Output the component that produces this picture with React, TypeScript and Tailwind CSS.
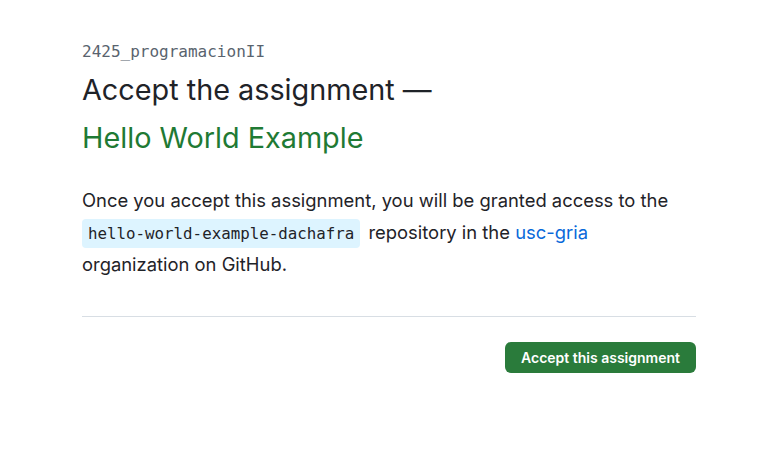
export default function App() {
  return (
    <div
      className="min-h-screen w-full bg-white text-[#1f2328]"
      style={{ fontFamily: 'Inter, "Noto Sans", "Liberation Sans", sans-serif' }}
    >
      <div className="ml-[82px] w-[614px] pt-[42px]">
        {/* Header */}
        <div
          className="text-[16px] leading-[20px] text-[#59636e]"
          style={{ fontFamily: '"DejaVu Sans Mono", "Liberation Mono", monospace' }}
        >
          2425_programacionII
        </div>
        <h1 className="mt-[4px] text-[28.8px] leading-[48px] font-normal">
          Accept the assignment —
        </h1>
        <h2 className="text-[28.8px] leading-[48px] font-normal text-[#1f7a34]">
          Hello World Example
        </h2>

        {/* Body */}
        <p className="mt-[22px] text-[18.4px] leading-[32px]">
          Once you accept this assignment, you will be granted access to the{' '}
          <code
            className="mr-[3px] rounded-[4px] bg-[#ddf4ff] px-[6px] py-[5px] text-[15.8px] leading-none text-[#1f2328]"
            style={{ fontFamily: '"DejaVu Sans Mono", "Liberation Mono", monospace' }}
          >
            hello-world-example-dachafra
          </code>{' '}
          repository in the{' '}
          <a href="#" className="text-[#0969da]">
            usc-gria
          </a>{' '}
          organization on GitHub.
        </p>

        <div className="mt-[36px] border-t border-[#d8dee4]" />

        <div className="mt-[25px] flex justify-end">
          <button className="h-[31px] rounded-[6px] bg-[#2a7b3b] px-[16px] text-[14px] font-semibold text-white">
            Accept this assignment
          </button>
        </div>
      </div>
    </div>
  );
}
